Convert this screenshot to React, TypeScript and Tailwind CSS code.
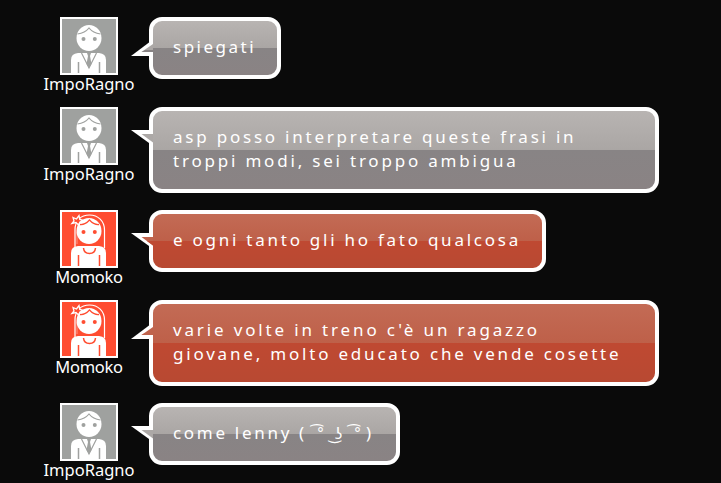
import React from "react";

type Line = { text: string; style: string; face?: boolean };
type Message = { user: "ImpoRagno" | "Momoko"; tail: "up" | "down"; size: string; lines: Line[] };

const messages: Message[] = [
  { user: "ImpoRagno", tail: "up", size: "w-[132px] h-[62px]", lines: [{ text: "spiegati", style: "tracking-[2.5px]" }] },
  {
    user: "ImpoRagno", tail: "down", size: "w-[510px] h-[86px]",
    lines: [
      { text: "asp posso interpretare queste frasi in", style: "tracking-[2.78px]" },
      { text: "troppi modi, sei troppo ambigua", style: "tracking-[2.8px]" },
    ],
  },
  { user: "Momoko", tail: "down", size: "w-[397px] h-[62px]", lines: [{ text: "e ogni tanto gli ho fato qualcosa", style: "tracking-[2.75px]" }] },
  {
    user: "Momoko", tail: "up", size: "w-[510px] h-[86px]",
    lines: [
      { text: "varie volte in treno c'è un ragazzo", style: "tracking-[2.85px]" },
      { text: "giovane, molto educato che vende cosette", style: "tracking-[2.8px]" },
    ],
  },
  { user: "ImpoRagno", tail: "down", size: "w-[251px] h-[62px]", lines: [{ text: "come lenny (", style: "tracking-[2.7px]", face: true }] },
];

function Avatar({ red }: { red: boolean }) {
  const c = red ? "#ff4d31" : "#9fa19f";
  return (
    <svg viewBox="0 0 58 58" className="block size-[58px] shrink-0">
      <rect width="58" height="58" fill="#fff" />
      <rect x="2" y="2" width="54" height="54" fill={c} />
      {red && (
        <g stroke="#fff" fill="none">
          <path d="M15 38V20C15 10.500 21 5 29.500 5S44.500 11 44.500 20V38" strokeWidth="1.200" />
          <path d="M17 34V22" strokeWidth=".8" opacity=".5" />
          <path d="M13 7.500L16.500 9L19 5.500L19.800 9.500L23.500 10.500L20 12L18.500 15L16 12.500L12 13.500L14 11Z" fill={c} strokeWidth="1.300" />
        </g>
      )}
      <path d="M11 56V43Q11 36.500 18 36H39Q46 36.500 46 43V56Z" fill="#fff" />
      <path d="M18.500 56V45M39.500 56V45" stroke={c} strokeWidth="1.500" />
      <ellipse cx="29" cy="21" rx="12.500" ry="13" fill="#fff" />
      <circle cx="23.500" cy="22" r="2" fill={c} />
      <circle cx="34.800" cy="22" r="2" fill={c} />
      {red ? (
        <>
          <path d="M20 14.500Q25 15 29.500 10Q34 15 39 14.500" fill="none" stroke={c} strokeWidth="1.300" />
          <path d="M23.500 38Q24 43.500 29.500 43.500T35.500 38" fill="none" stroke={c} strokeWidth="1.500" />
        </>
      ) : (
        <>
          <path d="M17.500 17Q25 16 29 11Q33 16 40.500 17" fill="none" stroke={c} strokeWidth="1.200" />
          <path d="M21.500 36L29 51L36.500 36" fill="none" stroke={c} strokeWidth="1.200" />
          <path d="M27 36H31L30 39L31.500 47L29 51L26.500 47L28 39Z" fill={c} />
        </>
      )}
    </svg>
  );
}

function Tail({ tail, red }: { tail: "up" | "down"; red: boolean }) {
  const light = red ? "#c0634c" : "#aca8a6";
  const dark = red ? "#bf4931" : "#888384";
  return tail === "up" ? (
    <svg viewBox="0 0 22 16" className="absolute -left-[22px] top-[20px] h-4 w-[22px]">
      <path d="M0 15L18 1.500L22 0V15Z" fill="#fff" />
      <path d="M10.500 11L22 3V11Z" fill={light} />
      <path d="M14 9H22V11H10.500Z" fill={red ? light : dark} />
    </svg>
  ) : (
    <svg viewBox="0 0 22 16" className="absolute -left-[22px] top-[19px] h-4 w-[22px]">
      <path d="M0 0H22V15L18 13Z" fill="#fff" />
      <path d="M10.500 4H22V12.500Z" fill={light} />
      {red && <path d="M16 8H22V12.500Z" fill={dark} />}
    </svg>
  );
}

function Face() {
  return (
    <span className="ml-[5px] inline-flex items-baseline font-['DejaVu_Sans',sans-serif] text-[15px] leading-6 tracking-normal">
      <span className="w-[18px]">{"\u00a0\u0361°"}</span>
      <span className="w-[19px]">{"\u00a0\u035cʖ"}</span>
      <span className="w-[17px]">{"\u00a0\u0361°"}</span>
      <span className="font-['Noto_Sans',sans-serif] text-[17px]">)</span>
    </span>
  );
}

export default function App() {
  return (
    <main className="flex h-[483px] w-[721px] flex-col gap-[17px] overflow-hidden bg-[#0a0a0a] pt-[17px] text-[17px] text-white">
      {messages.map((m, i) => {
        const red = m.user === "Momoko";
        return (
          <section key={i} className="flex shrink-0 items-start">
            <div className="ml-[29px] flex h-[73px] w-[120px] shrink-0 flex-col items-center font-['Noto_Sans',sans-serif]">
              <Avatar red={red} />
              <span className={`-mt-[1px] block text-[16.5px] leading-5 ${red ? "tracking-[-0.3px]" : "tracking-[0px]"}`}>{m.user}</span>
            </div>
            <div
              className={`relative shrink-0 rounded-[13px] border-4 border-white pl-5 pt-[14px] leading-6 ${m.size} ${
                red
                  ? "bg-[linear-gradient(to_bottom,#c36b55_0%,#be6049_50%,#bf4932_50%,#b84932_100%)]"
                  : "bg-[linear-gradient(to_bottom,#b8b4b2_0%,#aaa6a4_50%,#888485_50%,#8a8384_100%)]"
              }`}
            >
              <Tail tail={m.tail} red={red} />
              {m.lines.map((l) => (
                <p key={l.text} className={`h-6 whitespace-pre font-['Noto_Sans',sans-serif] ${l.style}`}>
                  {l.text}
                  {l.face && <Face />}
                </p>
              ))}
            </div>
          </section>
        );
      })}
    </main>
  );
}
